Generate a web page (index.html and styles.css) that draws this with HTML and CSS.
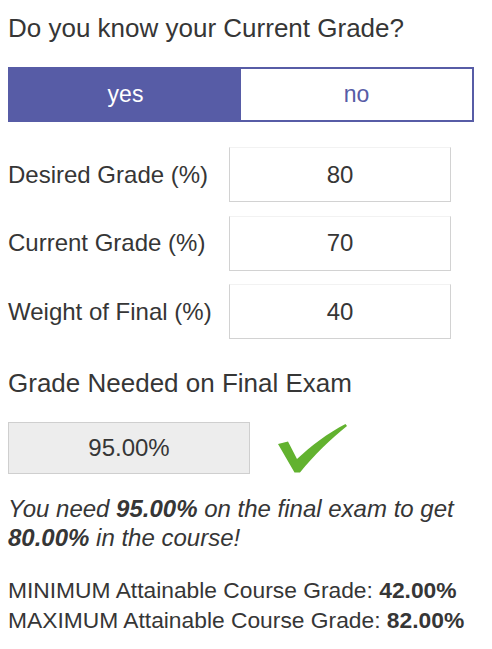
FILE: index.html
```html
<!DOCTYPE html>
<html lang="en">
<head>
    <meta charset="UTF-8">
    <meta name="viewport" content="width=device-width, initial-scale=1.0">
    <title>Final Grade Calculator</title>
    <link rel="stylesheet" href="styles.css">
</head>
<body>
    <h2 class="title">Do you know your Current Grade?</h2>

    <div class="toggle">
        <button class="toggle-btn active">yes</button>
        <button class="toggle-btn">no</button>
    </div>

    <div class="fields">
        <label class="field-label" for="desired">Desired Grade (%)</label>
        <input class="field-input" id="desired" type="text" value="80">

        <label class="field-label" for="current">Current Grade (%)</label>
        <input class="field-input" id="current" type="text" value="70">

        <label class="field-label" for="weight">Weight of Final (%)</label>
        <input class="field-input" id="weight" type="text" value="40">
    </div>

    <h2 class="title result-title">Grade Needed on Final Exam</h2>

    <div class="result-row">
        <div class="result-box">95.00%</div>
        <!-- check mark -->
        <svg class="check" width="72" height="52" viewBox="0 0 72 52">
            <path d="M2 22 L12 19.5 L21 37 C35 24 52 11 69.5 2 L71 4 C55 17 38 33 24 50.5 L18.5 50.5 Z" fill="#62b22f"/>
        </svg>
    </div>

    <p class="summary">You need <b>95.00%</b> on the final exam to get <b>80.00%</b> in the course!</p>

    <div class="limits">
        <div>MINIMUM Attainable Course Grade: <b>42.00%</b></div>
        <div>MAXIMUM Attainable Course Grade: <b>82.00%</b></div>
    </div>
</body>
</html>
```

FILE: styles.css
```css
body {
    font-family: "Liberation Sans", Arial, sans-serif;
    color: #363636;
    margin: 0;
    padding: 0 8px;
    background: #fff;
}

.title {
    font-size: 26px;
    font-weight: normal;
    line-height: 30px;
    margin: 13px 0 0 0;
}

/* Selector si / no */
.toggle {
    display: flex;
    width: 466px;
    height: 55px;
    margin-top: 24px;
    border: 2px solid #575ca6;
    box-sizing: border-box;
}
.toggle-btn {
    flex: 1;
    border: none;
    margin: 0;
    padding: 0;
    background: #fff;
    color: #575ca6;
    font-family: inherit;
    font-size: 23px;
}
.toggle-btn.active {
    background: #575ca6;
    color: #fff;
}

/* Campos */
.fields {
    display: grid;
    grid-template-columns: 221px 222px;
    grid-auto-rows: 55px;
    row-gap: 13.5px;
    margin-top: 25px;
    align-items: center;
}
.field-label {
    font-size: 24px;
}
.field-input {
    height: 55px;
    box-sizing: border-box;
    border: 1px solid #d2d2d2;
    border-top-color: #f2f2f2;
    border-radius: 0;
    font-family: inherit;
    font-size: 24px;
    color: #363636;
    text-align: center;
    padding: 0;
    margin: 0;
    width: 222px;
}

.result-title {
    margin-top: 29px;
}

.result-row {
    display: flex;
    align-items: center;
    gap: 26px;
    margin-top: 24px;
}
.result-box {
    width: 242px;
    height: 52px;
    box-sizing: border-box;
    border: 1px solid #cfcfcf;
    background-color: #ededed;
    font-size: 24px;
    display: flex;
    align-items: center;
    justify-content: center;
}

.summary {
    font-size: 24px;
    font-style: italic;
    line-height: 29px;
    margin: 20px 0 0 0;
}

.limits {
    font-size: 22.8px;
    line-height: 30px;
    margin-top: 23px;
}
```
